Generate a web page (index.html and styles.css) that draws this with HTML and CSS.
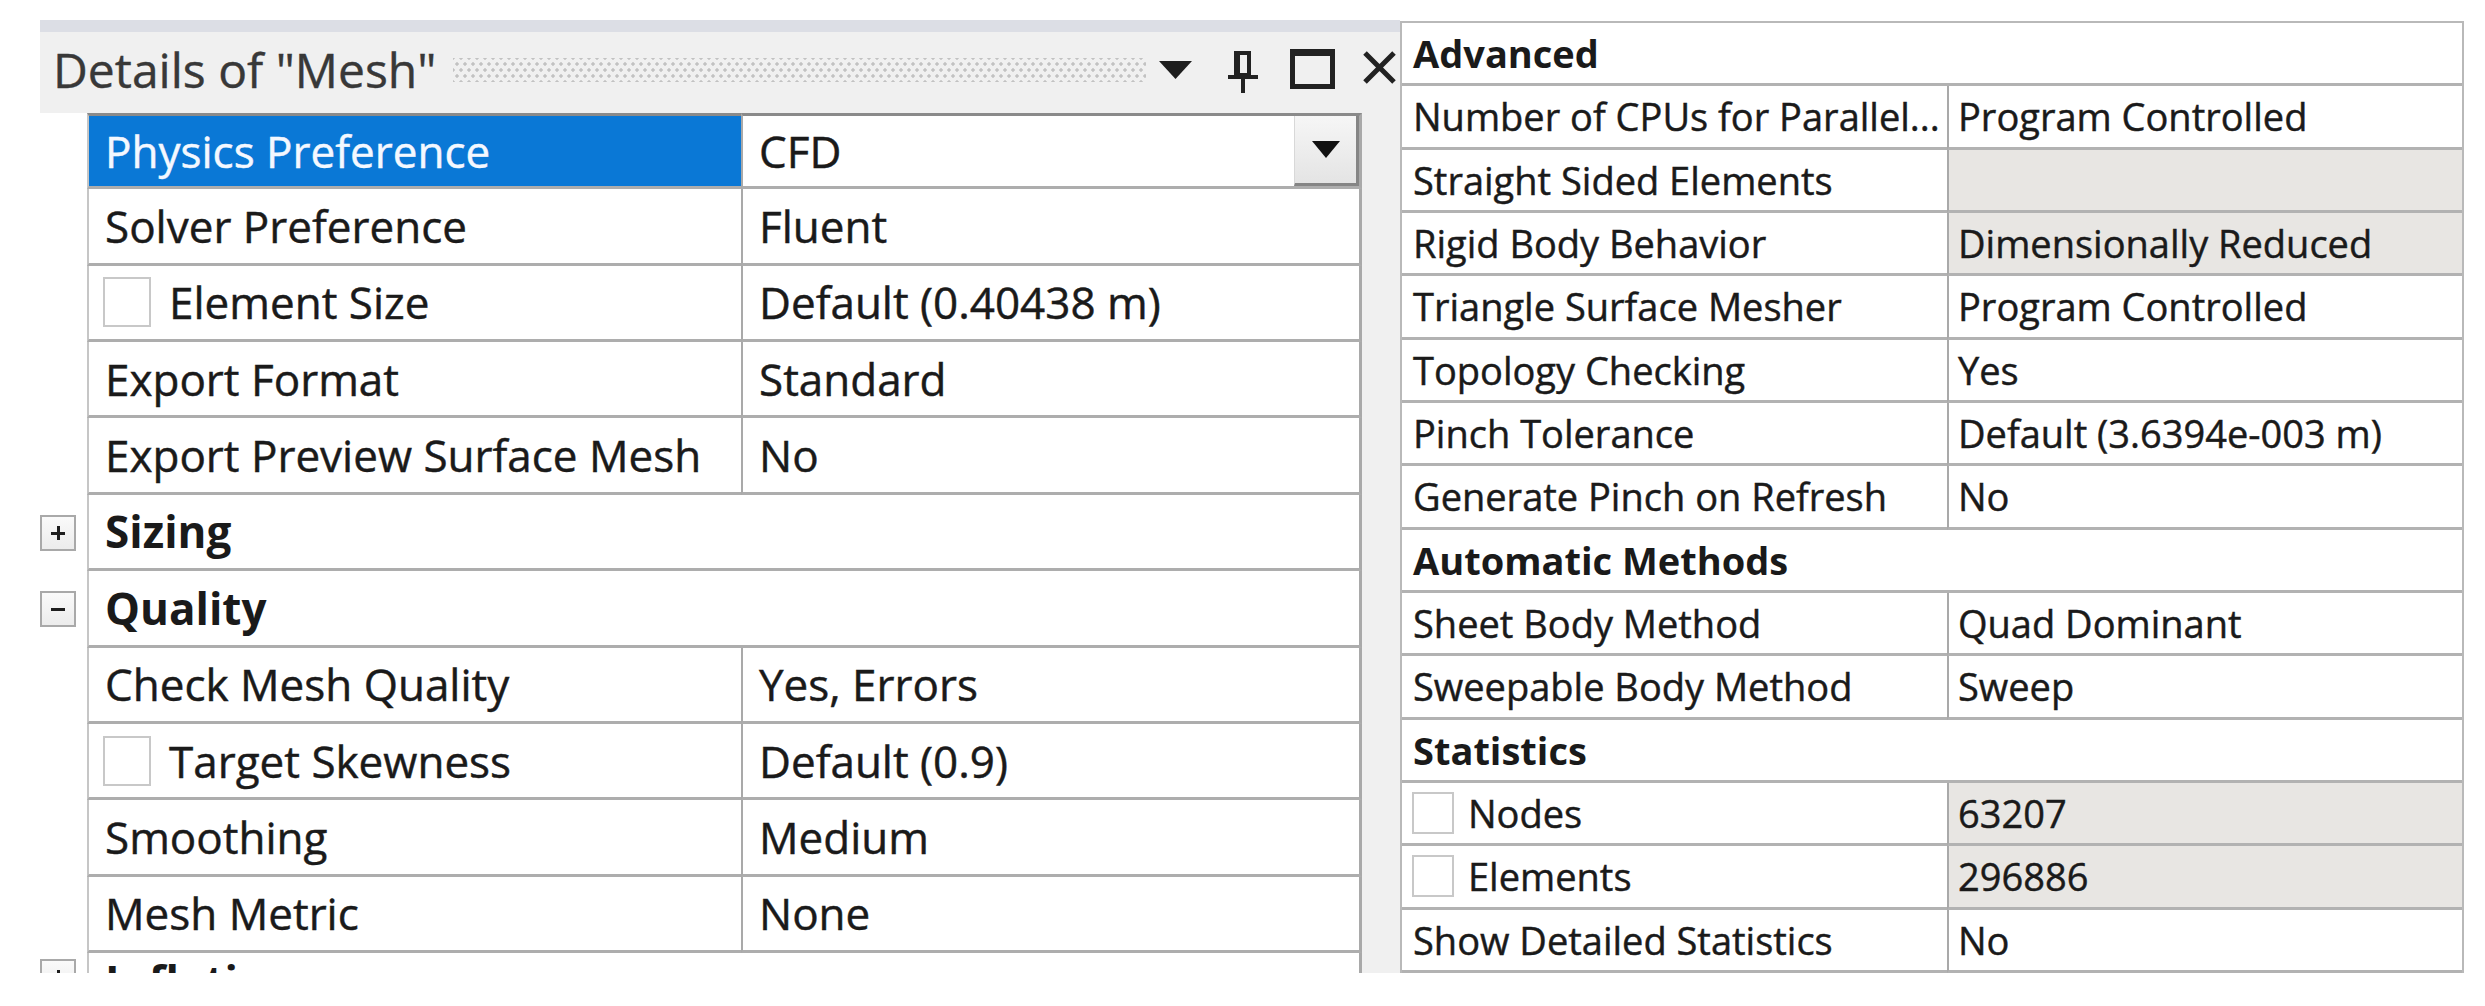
FILE: index.html
```html
<!DOCTYPE html>
<html lang="en">
<head>
    <meta charset="utf-8">
    <title>Details of "Mesh"</title>
    <meta name="viewport" content="width=device-width, initial-scale=1">
    <link rel="stylesheet" href="styles.css">
</head>
<body>
    <div class="workspace">
        <!-- Details pane, left -->
        <section class="details">
            <header class="details-head">
                <span class="details-title">Details of "Mesh"</span>
                <span class="grip"></span>
                <svg class="head-icon caret" width="33" height="18" viewBox="0 0 33 18"><polygon points="0,0 33,0 16.5,18" fill="#1e1e1e"/></svg>
                <svg class="head-icon pin" width="34" height="42" viewBox="0 0 34 42">
                    <rect x="11" y="2" width="12" height="22" fill="none" stroke="#222" stroke-width="4"/>
                    <line x1="11" y1="0" x2="11" y2="26" stroke="#222" stroke-width="6"/>
                    <line x1="2" y1="26" x2="32" y2="26" stroke="#222" stroke-width="4"/>
                    <line x1="17" y1="26" x2="17" y2="42" stroke="#222" stroke-width="4"/>
                </svg>
                <svg class="head-icon max" width="45" height="40" viewBox="0 0 45 40">
                    <rect x="2.5" y="3.5" width="40" height="34" fill="none" stroke="#222" stroke-width="5"/>
                    <line x1="0" y1="3.5" x2="45" y2="3.5" stroke="#222" stroke-width="7"/>
                </svg>
                <svg class="head-icon close" width="35" height="35" viewBox="0 0 35 35"><path d="M3 3 L32 32 M32 3 L3 32" stroke="#222" stroke-width="5" fill="none"/></svg>
            </header>
            <div class="details-body">
                <div class="props">
                    <div class="row first selected">
                        <div class="gutter"></div>
                        <div class="cell key">Physics Preference</div>
                        <div class="cell val">CFD
                            <span class="combo-btn"><svg width="28" height="17" viewBox="0 0 28 17"><polygon points="0,0 28,0 14,17" fill="#111"/></svg></span>
                        </div>
                    </div>
                    <div class="row">
                        <div class="gutter"></div>
                        <div class="cell key">Solver Preference</div>
                        <div class="cell val">Fluent</div>
                    </div>
                    <div class="row">
                        <div class="gutter"></div>
                        <div class="cell key"><span class="check"></span>Element Size</div>
                        <div class="cell val">Default (0.40438 m)</div>
                    </div>
                    <div class="row">
                        <div class="gutter"></div>
                        <div class="cell key">Export Format</div>
                        <div class="cell val">Standard</div>
                    </div>
                    <div class="row">
                        <div class="gutter"></div>
                        <div class="cell key">Export Preview Surface Mesh</div>
                        <div class="cell val">No</div>
                    </div>
                    <div class="row group">
                        <div class="gutter"><span class="expander plus"></span></div>
                        <div class="cell key">Sizing</div>
                    </div>
                    <div class="row group">
                        <div class="gutter"><span class="expander"></span></div>
                        <div class="cell key">Quality</div>
                    </div>
                    <div class="row">
                        <div class="gutter"></div>
                        <div class="cell key">Check Mesh Quality</div>
                        <div class="cell val">Yes, Errors</div>
                    </div>
                    <div class="row">
                        <div class="gutter"></div>
                        <div class="cell key"><span class="check"></span>Target Skewness</div>
                        <div class="cell val">Default (0.9)</div>
                    </div>
                    <div class="row">
                        <div class="gutter"></div>
                        <div class="cell key">Smoothing</div>
                        <div class="cell val">Medium</div>
                    </div>
                    <div class="row">
                        <div class="gutter"></div>
                        <div class="cell key">Mesh Metric</div>
                        <div class="cell val">None</div>
                    </div>
                    <div class="row group last">
                        <div class="gutter"><span class="expander plus"></span></div>
                        <div class="cell key">Inflation</div>
                    </div>
                </div>
                <div class="scroll-track"></div>
            </div>
        </section>

        <!-- Advanced / statistics block, right -->
        <section class="advanced">
            <div class="row group"><div class="cell key">Advanced</div></div>
            <div class="row"><div class="cell key">Number of CPUs for Parallel...</div><div class="cell val">Program Controlled</div></div>
            <div class="row"><div class="cell key">Straight Sided Elements</div><div class="cell val readonly"></div></div>
            <div class="row"><div class="cell key">Rigid Body Behavior</div><div class="cell val readonly">Dimensionally Reduced</div></div>
            <div class="row"><div class="cell key">Triangle Surface Mesher</div><div class="cell val">Program Controlled</div></div>
            <div class="row"><div class="cell key">Topology Checking</div><div class="cell val">Yes</div></div>
            <div class="row"><div class="cell key">Pinch Tolerance</div><div class="cell val">Default (3.6394e-003 m)</div></div>
            <div class="row"><div class="cell key">Generate Pinch on Refresh</div><div class="cell val">No</div></div>
            <div class="row group"><div class="cell key">Automatic Methods</div></div>
            <div class="row"><div class="cell key">Sheet Body Method</div><div class="cell val">Quad Dominant</div></div>
            <div class="row"><div class="cell key">Sweepable Body Method</div><div class="cell val">Sweep</div></div>
            <div class="row group"><div class="cell key">Statistics</div></div>
            <div class="row"><div class="cell key"><span class="check"></span>Nodes</div><div class="cell val readonly">63207</div></div>
            <div class="row"><div class="cell key"><span class="check"></span>Elements</div><div class="cell val readonly">296886</div></div>
            <div class="row"><div class="cell key">Show Detailed Statistics</div><div class="cell val">No</div></div>
        </section>
    </div>
</body>
</html>
```

FILE: styles.css
```css
* {
    box-sizing: border-box;
}
body {
    margin: 0;
    background: #fff;
    font-family: 'Open Sans', 'Noto Sans', Arial, sans-serif;
    color: #1a1a1a;
}
.workspace {
    display: flex;
    align-items: flex-start;
    padding: 20px 0 0 40px;
}

/* details pane */
.details {
    width: 1360px;
    height: 953px;
    overflow: hidden;
    background: #fff;
    border-top: 12px solid #dcdee5;
    display: flex;
    flex-direction: column;
}
.details-head {
    height: 81px;
    flex: none;
    background: #f0f0f0;
    display: flex;
    align-items: center;
    padding: 0 3px 6px 13px;
}
.details-title {
    font-size: 48px;
    line-height: 1;
    color: #383838;
    white-space: nowrap;
    -webkit-text-stroke: 0.4px #383838;
}
.grip {
    flex: 1;
    height: 24px;
    margin: 0 13px 0 17px;
    background-image:
        radial-gradient(circle, #c2c2c2 1.4px, transparent 2px),
        radial-gradient(circle, #c2c2c2 1.4px, transparent 2px);
    background-size: 8px 12px;
    background-position: 0 0, 4px 6px;
}
.head-icon {
    flex: none;
    display: block;
}
.caret { margin-right: 34px; }
.pin { margin-right: 30px; margin-top: 4px; }
.max { margin-right: 27px; margin-top: -2px; }
.close { margin-top: -4px; }

.details-body {
    flex: 1;
    display: flex;
    min-height: 0;
}
.props {
    width: 1322px;
    flex: none;
}
.scroll-track {
    flex: 1;
    background: #f0f0f0;
}

/* property rows */
.row {
    display: grid;
}
.props .row {
    grid-template-columns: 47px 654px 621px;
    height: 76.36px;
}
.cell {
    display: flex;
    align-items: center;
    line-height: 1;
    white-space: nowrap;
    overflow: hidden;
    border-bottom: 3px solid #adadad;
    -webkit-text-stroke: 0.45px currentColor;
}
.props .cell {
    font-size: 44px;
}
.props .key {
    padding-left: 16px;
    border-left: 2px solid #c6c6c6;
}
.props .val {
    padding-left: 16px;
    border-left: 2px solid #a9a9a9;
    border-right: 3px solid #a9a9a9;
}
.row.group .key {
    grid-column: 2 / span 2;
    font-weight: 700;
    border-right: 3px solid #a9a9a9;
    -webkit-text-stroke: 0;
}
.row.first .cell {
    border-top: 3px solid #8a8a8a;
}
.row.selected .key {
    background: #0a78d6;
    color: #f4f8ff;
}
/* only the top of this row shows above the pane edge */
.row.last .key,
.row.last .gutter {
    align-items: flex-start;
    padding-top: 6px;
}
.gutter {
    display: flex;
    align-items: center;
}
.expander {
    width: 36px;
    height: 36px;
    border: 2px solid #a9a9a9;
    background: linear-gradient(#fafafa, #ececec);
    position: relative;
}
.expander::before,
.expander.plus::after {
    content: '';
    position: absolute;
    background: #1e1e1e;
    left: 9px;
    top: 15px;
    width: 14px;
    height: 3px;
}
.expander.plus::after {
    left: 15px;
    top: 9px;
    width: 3px;
    height: 14px;
}
.check {
    flex: none;
    width: 48px;
    height: 50px;
    margin: 0 18px 0 -2px;
    border: 2px solid #c8c8c8;
    background: #fff;
}
.combo-btn {
    margin-left: auto;
    align-self: stretch;
    width: 65px;
    display: flex;
    align-items: center;
    justify-content: center;
    background: linear-gradient(#f6f6f6, #e4e4e4);
    border-left: 1px solid #d8d8d8;
    border-right: 3px solid #858585;
    border-bottom: 3px solid #858585;
}

/* advanced block */
.advanced {
    width: 1064px;
    margin-top: 1px;
    border: 2px solid #b9b9b9;
    border-bottom: none;
    background: #fff;
}
.advanced .row {
    grid-template-columns: 545px 1fr;
    height: 63.33px;
}
.advanced .cell {
    font-size: 38px;
    border-bottom-color: #b2b2b2;
}
.advanced .key {
    padding-left: 11px;
}
.advanced .row.group .key {
    grid-column: 1 / span 2;
    border-right: none;
}
.advanced .val {
    padding-left: 9px;
    border-left: 2px solid #a9a9a9;
}
.advanced .val.readonly {
    background: #e8e6e3;
}
.advanced .check {
    width: 42px;
    height: 42px;
    margin: 0 14px 0 -1px;
}
```
